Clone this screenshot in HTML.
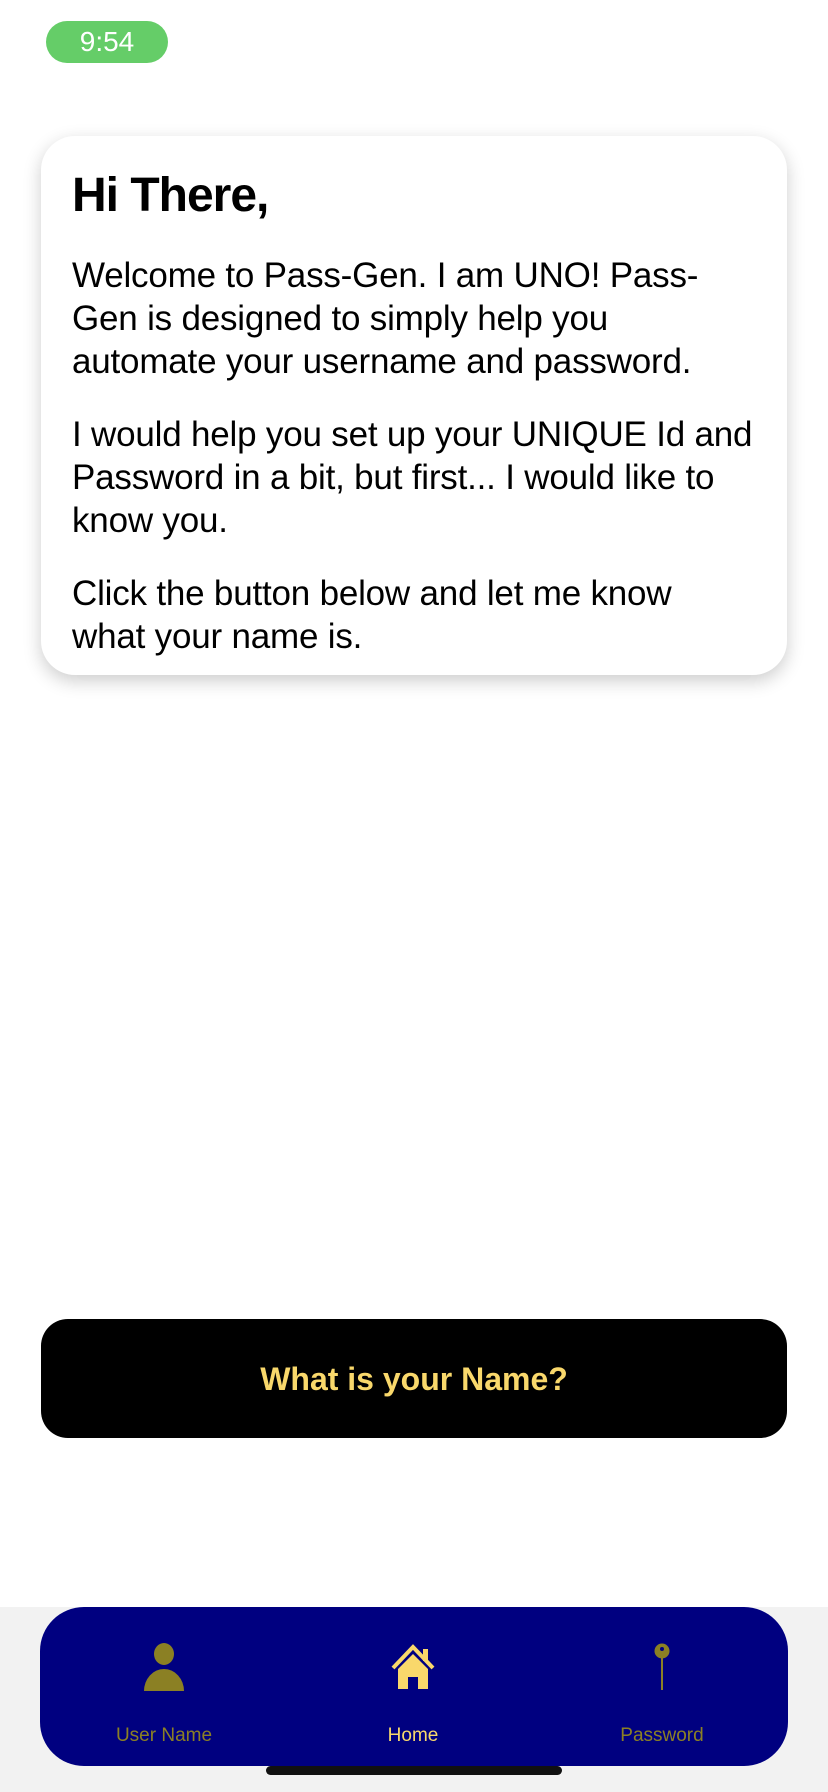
<!DOCTYPE html>
<html><head><meta charset="utf-8"><style>
*{margin:0;padding:0;box-sizing:border-box}
body{width:828px;height:1792px;background:#fff;position:relative;overflow:hidden;font-family:"Liberation Sans",sans-serif}
.pill{position:absolute;left:46px;top:21px;width:122px;height:42px;border-radius:21px;background:#65cd68;color:#fff;font-size:28px;text-align:center;line-height:42px}
.card{position:absolute;left:41px;top:136px;width:746px;height:539px;border-radius:34px;background:#fff;box-shadow:0 6px 18px rgba(0,0,0,.2);padding:33px 10px 0 31px}
h1{font-size:48px;font-weight:900;letter-spacing:-1px;line-height:54px;margin-bottom:31px;white-space:nowrap}
p{font-size:35px;line-height:43px;font-weight:300;margin-bottom:30px;color:#000;white-space:nowrap;letter-spacing:-0.2px}
p.r{font-weight:400}
.btn{position:absolute;left:41px;top:1319px;width:746px;height:119px;border-radius:27px;background:#000;color:#f9d86b;font-weight:bold;font-size:32px;text-align:center;line-height:121px}
.bottom{position:absolute;left:0;top:1607px;width:828px;height:185px;background:#f2f2f2}
.tab{position:absolute;left:40px;top:1607px;width:748px;height:159px;border-radius:44px;background:#000080}
.it{position:absolute;top:0;width:200px;text-align:center}
.it svg{position:absolute;top:36px}
.it span{position:absolute;top:118px;left:0;width:200px;font-size:19px;color:#8b8024}
.ind{position:absolute;left:266px;top:1766px;width:296px;height:9px;border-radius:5px;background:#111}
</style></head><body>
<div class="pill">9:54</div>
<div class="card">
<h1>Hi There,</h1>
<p>Welcome to Pass-Gen. I am UNO! Pass-<br>Gen is designed to simply help you<br>automate your username and password.</p>
<p>I would help you set up your UNIQUE Id and<br>Password in a bit, but first... I would like to<br>know you.</p>
<p class="r">Click the button below and let me know<br>what your name is.</p>
</div>
<div class="btn">What is your Name?</div>
<div class="bottom"></div>
<div class="tab">
<div class="it" style="left:24px"><svg width="44" height="48" viewBox="0 0 44 48" style="left:78px"><ellipse cx="22" cy="11" rx="10" ry="11" fill="#8b8024"/><path d="M2 48 A20 22 0 0 1 42 48 Z" fill="#8b8024"/></svg><span>User Name</span></div>
<div class="it" style="left:273px"><svg width="48" height="48" viewBox="0 0 48 48" style="left:76px"><path d="M4 25 L24 4 L44 25" stroke="#f9d86b" stroke-width="4" fill="none"/><rect x="34" y="6" width="5" height="12" fill="#f9d86b"/><path d="M9 26 L24 11 L39 26 V46 H29 V34 H19 V46 H9 Z" fill="#f9d86b"/></svg><span style="color:#f9d86b">Home</span></div>
<div class="it" style="left:522px"><svg width="20" height="50" viewBox="0 0 20 50" style="left:90px"><circle cx="10" cy="8" r="7.5" fill="#8b8024"/><circle cx="10" cy="6" r="2" fill="#000080"/><rect x="9" y="14" width="2" height="33" fill="#8b8024"/></svg><span>Password</span></div>
</div>
<div class="ind"></div>
</body></html>
